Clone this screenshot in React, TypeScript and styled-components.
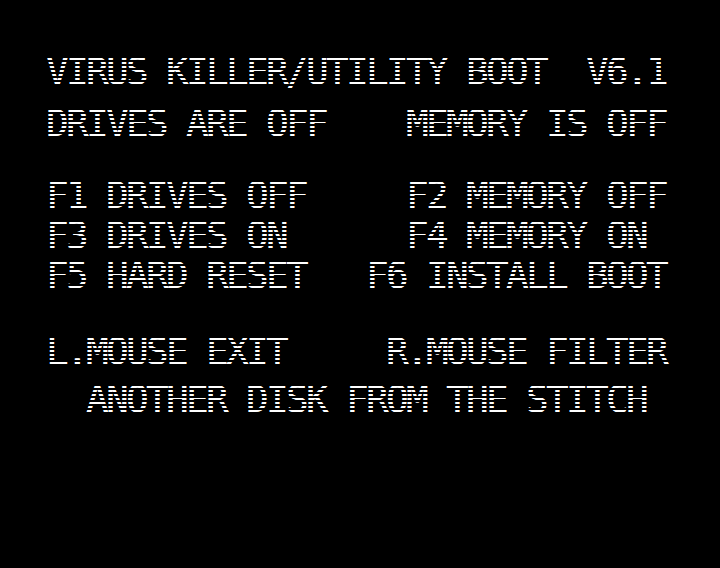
import React from "react";
import styled, { createGlobalStyle } from "styled-components";

const GlobalStyle = createGlobalStyle`
  html, body {
    margin: 0;
    padding: 0;
    background: #000;
  }
  #root {
    width: 720px;
    height: 568px;
  }
`;

const Screen = styled.div`
  position: relative;
  width: 720px;
  height: 568px;
  box-sizing: border-box;
  padding: 52px 0 0 46px;
  background: #000;
  color: #fff;
  font-family: "DejaVu Sans Mono", "Liberation Mono", monospace;
  font-size: 37px;
  letter-spacing: -2.276px;
  display: flex;
  flex-direction: column;
  overflow: hidden;

  &::after {
    content: "";
    position: absolute;
    inset: 0;
    pointer-events: none;
    background: repeating-linear-gradient(
      to bottom,
      #000 0px,
      #000 2px,
      transparent 2px,
      transparent 4px
    );
  }
`;

const Group = styled.div<{ $gap: number; $top: number }>`
  display: flex;
  flex-direction: column;
  gap: ${(p) => p.$gap}px;
  margin-top: ${(p) => p.$top}px;
`;

const Line = styled.div`
  height: 40px;
  line-height: 40px;
  white-space: pre;
  text-shadow: 0.4px 0 0 #fff;
`;

const header = [
  "VIRUS KILLER/UTILITY BOOT  V6.1",
  "DRIVES ARE OFF    MEMORY IS OFF",
];

const keys = [
  "F1 DRIVES OFF     F2 MEMORY OFF",
  "F3 DRIVES ON      F4 MEMORY ON",
  "F5 HARD RESET   F6 INSTALL BOOT",
];

const footer = [
  "L.MOUSE EXIT     R.MOUSE FILTER",
  "  ANOTHER DISK FROM THE STITCH",
];

export default function App() {
  return (
    <>
      <GlobalStyle />
      <Screen>
        <Group $gap={12} $top={0}>
          {header.map((t) => (
            <Line key={t}>{t}</Line>
          ))}
        </Group>
        <Group $gap={0} $top={32}>
          {keys.map((t) => (
            <Line key={t}>{t}</Line>
          ))}
        </Group>
        <Group $gap={8} $top={36}>
          {footer.map((t) => (
            <Line key={t}>{t}</Line>
          ))}
        </Group>
      </Screen>
    </>
  );
}
